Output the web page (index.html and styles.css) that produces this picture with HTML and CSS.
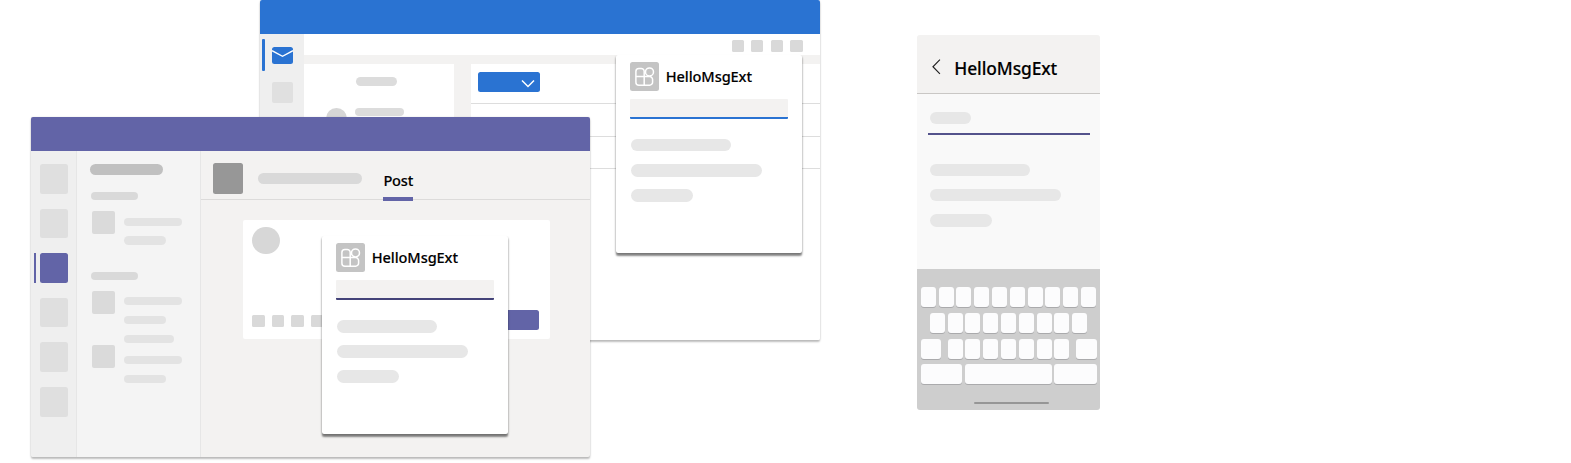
FILE: index.html
```html
<!DOCTYPE html>
<html lang="en">
<head>
<meta charset="utf-8">
<title>HelloMsgExt</title>
<link rel="stylesheet" href="styles.css">
</head>
<body>
<svg class="defs" width="0" height="0">
  <symbol id="app" viewBox="0 0 28.7 28.7">
    <path d="M14.2 14.600V9.400a3 3 0 0 0-3-3H8.900a3 3 0 0 0-3 3V20.200a3 3 0 0 0 3 3H19.600a3 3 0 0 0 3-3V17.600a3 3 0 0 0-3-3H5.900M14.200 23.200V14.600" fill="none" stroke="#fff" stroke-width="1.500"/>
    <circle cx="19.500" cy="9.900" r="4" fill="#c4c4c4" stroke="#fff" stroke-width="1.500"/>
  </symbol>
</svg>
<main class="canvas">
  <section class="window outlook">
    <header class="titlebar"></header>
    <div class="body">
      <nav class="rail">
        <div class="mail-row"><i class="marker"></i>
          <svg class="mail" viewBox="0 0 21 17"><rect width="21" height="17" rx="2.500" fill="#2a73d2"/><path d="M0 3.700 10.500 9.300 21 3.700" fill="none" stroke="#fff" stroke-width="1.400"/></svg>
        </div>
        <i class="block"></i>
      </nav>
      <div class="content">
        <div class="tools"><i></i><i></i><i></i><i></i></div>
        <div class="panes">
          <div class="messages">
            <i class="pill first"></i>
            <div class="message"><i class="avatar"></i><i class="pill"></i></div>
          </div>
          <div class="reading">
            <div class="row top"><div class="button"><svg viewBox="0 0 14 9"><path d="M1 1.500 7 7.500 13 1.500" fill="none" stroke="#fff" stroke-width="1.500"/></svg></div></div>
            <div class="row"></div>
            <div class="row"></div>
          </div>
        </div>
      </div>
    </div>
    <aside class="popup">
      <div class="heading"><svg class="app"><use href="#app"/></svg><span>HelloMsgExt</span></div>
      <div class="input"></div>
      <div class="lines"><i></i><i></i><i></i></div>
    </aside>
  </section>

  <section class="window teams">
    <header class="titlebar"></header>
    <div class="body">
      <nav class="rail"><i></i><i></i><i class="active"></i><i></i><i></i><i></i></nav>
      <div class="list">
        <i class="pill heavy"></i>
        <i class="pill group"></i>
        <div class="entry one"><i class="thumb"></i><div><i class="long"></i><i></i></div></div>
        <i class="pill group second"></i>
        <div class="entry two"><i class="thumb"></i><div><i class="long"></i><i></i><i class="mid"></i></div></div>
        <div class="entry three"><i class="thumb"></i><div><i class="long"></i><i></i></div></div>
      </div>
      <div class="channel">
        <div class="tabs"><i class="team"></i><i class="name"></i><span class="tab">Post</span></div>
        <div class="compose">
          <i class="avatar"></i>
          <div class="actions"><i></i><i></i><i></i><i></i><b class="send"></b></div>
        </div>
      </div>
    </div>
    <aside class="popup">
      <div class="heading"><svg class="app"><use href="#app"/></svg><span>HelloMsgExt</span></div>
      <div class="input"></div>
      <div class="lines"><i></i><i></i><i></i></div>
    </aside>
  </section>

  <section class="phone">
    <header class="phone-head"><svg viewBox="0 0 9 16"><path d="M8.300.600 1 8 8.300 15.400" fill="none" stroke="#222" stroke-width="1.200"/></svg><span>HelloMsgExt</span></header>
    <div class="phone-body">
      <i class="field"></i>
      <div class="rule"></div>
      <div class="lines"><i></i><i></i><i></i></div>
    </div>
    <div class="keyboard">
      <div class="keys"><i></i><i></i><i></i><i></i><i></i><i></i><i></i><i></i><i></i><i></i></div>
      <div class="keys inset"><i></i><i></i><i></i><i></i><i></i><i></i><i></i><i></i><i></i></div>
      <div class="keys"><i class="shift"></i><i></i><i></i><i></i><i></i><i></i><i></i><i></i><i class="erase"></i></div>
      <div class="keys"><i class="wide"></i><i class="space"></i><i class="wide enter"></i></div>
      <div class="home"></div>
    </div>
  </section>
</main>
</body>
</html>
```
FILE: styles.css
```css
* { box-sizing: border-box; }
body { margin: 0; background: #fff; font-family: "Noto Sans", "Open Sans", sans-serif; font-weight: 500; color: #000; overflow: hidden; }
i, b { display: block; flex: none; }
.defs { position: absolute; }
.canvas { position: relative; width: 1571px; height: 463px; overflow: hidden; }

/* Application windows */
.window { position: absolute; width: 559.5px; height: 339.6px; border-radius: 2px; box-shadow: 0 2px 2px rgba(0,0,0,.25), 0 0 2px rgba(0,0,0,.12); }
.titlebar { height: 34px; border-radius: 2px 2px 0 0; }
.body { display: flex; height: 305.6px; overflow: hidden; border-radius: 0 0 2px 2px; }

.outlook { left: 260.4px; top: 0; background: #fff; }
.outlook .titlebar { background: #2a73d2; }
.outlook .rail { width: 44px; background: #efefef; padding-top: 5px; }
.mail-row { display: flex; align-items: center; height: 32px; padding-left: 2px; }
.marker { width: 2.5px; height: 32px; background: #2a73d2; border-radius: 1px; }
.mail { width: 21px; height: 17px; margin-left: 7.2px; }
.outlook .block { width: 21.5px; height: 21px; margin: 11px 0 0 11.2px; background: #e0e0e0; border-radius: 2px; }
.outlook .content { flex: 1; }
.tools { display: flex; gap: 7.4px; height: 21px; padding: 5.7px 17.3px 0 0; justify-content: flex-end; }
.tools i { width: 12.2px; height: 12.2px; background: #d9d9d9; border-radius: 1.5px; }
.panes { display: flex; height: 285px; padding-top: 8.7px; gap: 16.3px; background: #f3f2f1; }
.messages { width: 150px; background: #fff; padding-top: 13.3px; }
.messages .pill { width: 48.3px; height: 8px; background: #dcdcdc; border-radius: 5px; }
.messages .first { width: 41.5px; height: 9px; margin-left: 51.2px; }
.message { display: flex; gap: 8px; margin: 21.7px 0 0 21.5px; }
.message .avatar { width: 21.6px; height: 21.6px; border-radius: 50%; background: #d6d6d6; }
.reading { flex: 1; background: #fff; }
.row { height: 32.4px; border-bottom: 1.3px solid #ddd; }
.row.top { height: 40.5px; padding: 8.3px 0 0 7px; }
.button { width: 62px; height: 20.2px; display: flex; align-items: center; justify-content: flex-end; padding: 3px 5px 0 0; border-radius: 2.5px; background: #2a73d2; }
.button svg { width: 14px; height: 9px; }

.teams { left: 30.8px; top: 117px; background: #f3f2f1; }
.teams .titlebar { background: #6264a7; }
.teams .rail { width: 46.7px; padding: 13px 0 0 9.7px; background: #efefef; border-right: 1px solid #e6e6e6; display: flex; flex-direction: column; gap: 14.9px; }
.teams .rail i { position: relative; width: 28px; height: 29.7px; border-radius: 2.5px; background: #dfdfdf; }
.teams .rail .active { background: #6264a7; }
.rail .active::before { content: ""; position: absolute; left: -6.4px; top: 0; width: 2px; height: 29.7px; background: #6264a7; }
.list { width: 124px; padding: 13px 0 0 12.6px; background: #f4f4f4; border-right: 1px solid #e6e6e6; }
.heavy { width: 72.6px; height: 10.6px; border-radius: 6px; background: #c0c0c0; }
.group { width: 46.6px; height: 8px; margin: 17.4px 0 0 1.2px; border-radius: 4px; background: #d9d9d9; }
.entry { display: flex; height: 33px; margin: 11.5px 0 0 2.4px; gap: 9px; }
.thumb { width: 23px; height: 23px; border-radius: 2px; background: #dadada; }
.entry > div { display: grid; align-content: start; gap: 10.5px; padding-top: 6.2px; }
.entry div i { width: 41.5px; height: 8.2px; border-radius: 5px; background: #e3e3e3; }
.entry div .long { width: 58px; }
.entry div .mid { width: 49.5px; }
.second { margin-top: 28px; }
.entry.two { margin-top: 10.6px; height: 54px; }
.entry.three { margin-top: 0; }
.entry.three > div { padding-top: 10.9px; }
.channel { flex: 1; }
.tabs { display: flex; height: 49.4px; padding: 12.3px 0 0 11.5px; border-bottom: 1.6px solid #dcdbda; }
.team { width: 30px; height: 30.3px; background: #979797; border-radius: 2.5px; }
.tabs .name { width: 104.5px; height: 10.8px; margin: 9.7px 20.5px 0 15px; border-radius: 6px; background: #d9d9d9; }
.tab { width: 30.5px; height: 38px; padding-top: 6.7px; text-align: center; font-size: 14.6px; line-height: 20px; border-bottom: 4.3px solid #6264a7; letter-spacing: -.2px; -webkit-text-stroke: .15px #000; }
.compose { width: 307.5px; height: 119.3px; margin: 19.2px 0 0 41.4px; padding: 7.2px 11px 9px 9.6px; display: flex; flex-direction: column; justify-content: space-between; background: #fff; border-radius: 2px; }
.compose .avatar { width: 27.4px; height: 27.4px; border-radius: 50%; background: #d7d7d7; }
.actions { display: flex; align-items: center; gap: 7.3px; }
.actions i { width: 12.2px; height: 12.2px; margin-top: 1px; border-radius: 1.5px; background: #d9d9d9; }
.send { width: 62px; height: 19.5px; margin-left: auto; border-radius: 2.5px; background: #6264a7; }

/* Message extension popup */
.popup { position: absolute; width: 186.4px; height: 198.6px; padding: 7px 14.4px; background: #fff; border-radius: 2px; box-shadow: 0 2.5px 2px rgba(0,0,0,.45), 0 1px 2.5px rgba(0,0,0,.2); clip-path: inset(0 -8px -8px -8px); }
.outlook .popup { left: 355.3px; top: 54.7px; }
.teams .popup { left: 290.9px; top: 118.8px; }
.heading { display: flex; align-items: center; height: 29px; gap: 7px; font-size: 14.6px; letter-spacing: -.1px; white-space: nowrap; -webkit-text-stroke: .15px #000; }
.app { width: 28.7px; height: 28.7px; border-radius: 2.5px; background: #c4c4c4; }
.input { width: 158px; height: 20px; margin-top: 8px; border-radius: 1px; background: #f3f2f1; border-bottom: 2.2px solid #444379; }
.outlook .input { border-color: #2a73d2; }
.lines { display: grid; gap: 12.8px; }
.popup .lines { padding: 20.5px 0 0 .8px; }
.lines i { width: 100.5px; height: 12.3px; border-radius: 7px; background: #e7e7e7; }
.lines i:nth-child(2) { width: 131.3px; }
.lines i:nth-child(3) { width: 61.7px; }

/* Phone */
.phone { position: absolute; left: 916.6px; top: 34.6px; width: 183.5px; height: 375.3px; border-radius: 3px; background: #f9f9f9; overflow: hidden; }
.phone-head { display: flex; align-items: center; gap: 13.3px; height: 59.3px; padding: 9px 0 0 15.8px; background: #f3f2f1; border-bottom: 1px solid #c9c7c5; font-size: 17.4px; letter-spacing: -.1px; -webkit-text-stroke: .15px #000; }
.phone-head svg { width: 8.6px; height: 15.5px; margin-bottom: 2px; }
.phone-body { height: 174.8px; padding: 18px 0 0 13.4px; }
.field { width: 41px; height: 12.2px; border-radius: 7px; background: #e7e7e7; }
.rule { width: 161.5px; height: 2.4px; margin: 9px 0 0 -1.5px; background: #54538c; }
.phone .lines { margin-top: 28.6px; }
.keyboard { height: 141.4px; padding: 18.6px 0 0 4.3px; background: #cecece; }
.keys { display: flex; gap: 2.8px; height: 20.3px; margin-bottom: 5.4px; }
.keys.inset { padding-left: 8.9px; }
.keys i { width: 15px; height: 20px; border-radius: 3px; background: #fcfcfd; box-shadow: 0 1px 0 #aaaaac; }
.keys .shift { width: 20.4px; margin-right: 3.6px; }
.keys .erase { width: 20.4px; margin-left: 4.2px; }
.keys .wide { width: 41.5px; }
.keys .space { width: 86.5px; }
.keys .enter { width: 42.2px; }
.home { width: 75px; height: 2.2px; margin: 17.3px 0 0 53px; border-radius: 1px; background: #969696; }
```
